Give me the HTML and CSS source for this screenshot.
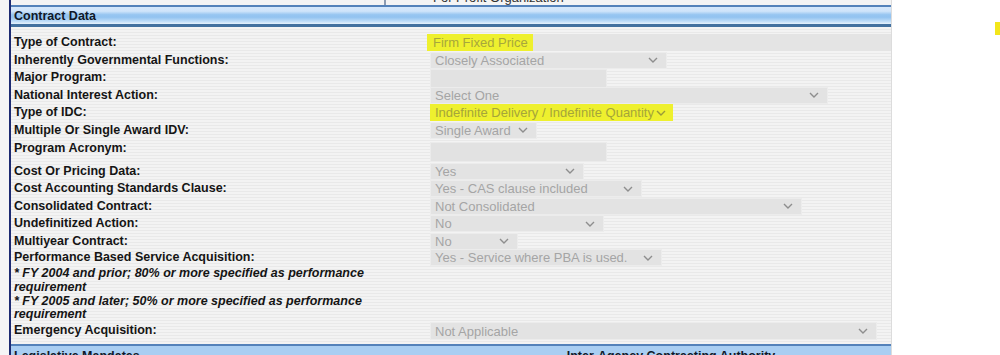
FILE: index.html
```html
<!DOCTYPE html>
<html lang="en">
<head>
  <title>Contract Data</title>
  <meta charset="UTF-8">
  <meta name="viewport" content="width=device-width, initial-scale=1">
  <link rel="stylesheet" href="styles.css">
</head>
<body>
  <div class="page">
    <div class="gutter"></div>
    <div class="panel">
      <div class="top-row">
        <div class="top-cell"></div>
        <div class="top-opt"><span class="dot"></span>For Profit Organization</div>
      </div>
      <div class="section-head">Contract Data</div>
      <div class="rows">
        <div class="row">
          <div class="label">Type of Contract:</div>
          <div class="field"><div class="bar"><span class="hl">Firm Fixed Price</span></div></div>
        </div>
        <div class="row">
          <div class="label">Inherently Governmental Functions:</div>
          <div class="field"><div class="select w237"><span>Closely Associated</span><svg width="10" height="6"><polyline points="1,1 5,5 9,1"/></svg></div></div>
        </div>
        <div class="row">
          <div class="label">Major Program:</div>
          <div class="field"><div class="input"></div></div>
        </div>
        <div class="row">
          <div class="label">National Interest Action:</div>
          <div class="field"><div class="select w398"><span>Select One</span><svg width="10" height="6"><polyline points="1,1 5,5 9,1"/></svg></div></div>
        </div>
        <div class="row">
          <div class="label">Type of IDC:</div>
          <div class="field"><div class="select w243 marked"><span>Indefinite Delivery / Indefinite Quantity</span><svg width="10" height="6"><polyline points="1,1 5,5 9,1"/></svg></div></div>
        </div>
        <div class="row">
          <div class="label">Multiple Or Single Award IDV:</div>
          <div class="field"><div class="select w107"><span>Single Award</span><svg width="10" height="6"><polyline points="1,1 5,5 9,1"/></svg></div></div>
        </div>
        <div class="row tall">
          <div class="label">Program Acronym:</div>
          <div class="field"><div class="input big"></div></div>
        </div>
        <div class="row">
          <div class="label">Cost Or Pricing Data:</div>
          <div class="field"><div class="select w154"><span>Yes</span><svg width="10" height="6"><polyline points="1,1 5,5 9,1"/></svg></div></div>
        </div>
        <div class="row">
          <div class="label">Cost Accounting Standards Clause:</div>
          <div class="field"><div class="select w212"><span>Yes - CAS clause included</span><svg width="10" height="6"><polyline points="1,1 5,5 9,1"/></svg></div></div>
        </div>
        <div class="row">
          <div class="label">Consolidated Contract:</div>
          <div class="field"><div class="select w372"><span>Not Consolidated</span><svg width="10" height="6"><polyline points="1,1 5,5 9,1"/></svg></div></div>
        </div>
        <div class="row">
          <div class="label">Undefinitized Action:</div>
          <div class="field"><div class="select w174"><span>No</span><svg width="10" height="6"><polyline points="1,1 5,5 9,1"/></svg></div></div>
        </div>
        <div class="row short">
          <div class="label">Multiyear Contract:</div>
          <div class="field"><div class="select w88"><span>No</span><svg width="10" height="6"><polyline points="1,1 5,5 9,1"/></svg></div></div>
        </div>
        <div class="row auto">
          <div class="label">
            Performance Based Service Acquisition:
            <div class="note">* FY 2004 and prior; 80% or more specified as performance requirement</div>
            <div class="note">* FY 2005 and later; 50% or more specified as performance requirement</div>
          </div>
          <div class="field"><div class="select w232"><span>Yes - Service where PBA is used.</span><svg width="10" height="6"><polyline points="1,1 5,5 9,1"/></svg></div></div>
        </div>
        <div class="row">
          <div class="label">Emergency Acquisition:</div>
          <div class="field"><div class="select w447 tall-sel"><span>Not Applicable</span><svg width="10" height="6"><polyline points="1,1 5,5 9,1"/></svg></div></div>
        </div>
      </div>
      <div class="section-head split">
        <div class="half">Legislative Mandates</div>
        <div class="half center">Inter-Agency Contracting Authority</div>
      </div>
    </div>
    <div class="side"><span class="mark"></span></div>
  </div>
</body>
</html>
```

FILE: styles.css
```css
/* page */
body {
  margin: 0;
  font-family: "Liberation Sans", Arial, Helvetica, sans-serif;
  background: #fff;
  overflow: hidden;
}

.page {
  display: flex;
  height: 355px;
  overflow: hidden;
}

.gutter {
  width: 9px;
  background: #f5f5f6;
}

/* main panel */
.panel {
  width: 880px;
  border-left: 2px solid #1d2b72;
  border-right: 1px solid #dcdcdc;
  background: repeating-linear-gradient(to bottom, #f3f3f3 0, #f3f3f3 2px, #e9e9e9 2px, #e9e9e9 3px);
}

/* row cut off above */
.top-row {
  display: flex;
  height: 5px;
  overflow: hidden;
  background: #f4f4f4;
}

.top-cell {
  width: 373px;
  border-right: 2px solid #8d9cb2;
}

.top-opt {
  margin-top: -10px;
  padding-left: 37px;
  font-size: 13px;
  line-height: 15px;
  color: #333;
  display: flex;
  align-items: center;
}

.dot {
  width: 4px;
  height: 4px;
  margin-right: 6px;
  background: #c9d3a8;
}

/* blue section bars */
.section-head {
  height: 17px;
  border-top: 2px solid #5482ba;
  border-bottom: 3px solid #42709f;
  background: linear-gradient(to bottom, #d6e8fb 0, #cfe4fa 25%, #98c6f1 45%, #93c3f0 60%, #c0ddf8 85%, #e6f1fc 100%);
  padding-left: 3px;
  font-size: 12.5px;
  font-weight: bold;
  line-height: 18px;
  color: #101828;
}

.section-head.split {
  display: flex;
  height: 11px;
  margin-top: 4px;
  border-bottom: none;
  background: #a9cef2;
  padding-top: 3px;
  line-height: 15px;
  overflow: hidden;
  align-items: flex-start;
}

.half {
  width: 438px;
}

.half.center {
  text-align: center;
}

/* form rows */
.rows {
  padding-top: 7px;
}

.row {
  display: flex;
  height: 17.6px;
}

.row.tall {
  height: 23px;
}

.row.short {
  height: 16.5px;
}

.row.auto {
  height: auto;
}

.label {
  width: 416px;
  padding-left: 3px;
  font-size: 12.5px;
  font-weight: bold;
  line-height: 17.6px;
  color: #151515;
}

.note {
  font-style: italic;
  line-height: 13.8px;
}

.field {
  flex: 1;
}

/* disabled controls */
.bar {
  height: 17px;
  margin-left: -3px;
  background: #e4e4e4;
  font-size: 13px;
  line-height: 17px;
}

.hl {
  display: inline-block;
  padding: 0 5px 0 6px;
  background: #eef02e;
  color: #a7a73c;
}

.select {
  display: flex;
  align-items: center;
  justify-content: space-between;
  box-sizing: border-box;
  height: 17px;
  padding: 0 8px 0 4px;
  background: #e3e3e3;
  border: 1px solid #ececec;
  font-size: 13px;
  color: #a5a5a5;
  white-space: nowrap;
}

.select svg {
  flex: none;
  fill: none;
  stroke: #8e8e8e;
  stroke-width: 1.4;
}

.select.marked {
  background: #eef02e;
  border-color: #eef02e;
  color: #a5a53a;
  padding-right: 6px;
}

.select.marked svg {
  stroke: #9a9a3a;
}

.select.tall-sel {
  height: 18px;
}

.input {
  width: 177px;
  height: 19px;
  box-sizing: border-box;
  background: #e2e2e2;
  border: 1px solid #ebebeb;
}

.input.big {
  height: 20px;
  margin-top: 2px;
}

.w88 { width: 88px; }
.w107 { width: 107px; }
.w154 { width: 154px; }
.w174 { width: 174px; }
.w212 { width: 212px; }
.w232 { width: 232px; }
.w237 { width: 237px; }
.w243 { width: 243px; }
.w372 { width: 372px; }
.w398 { width: 398px; }
.w447 { width: 447px; }

/* right margin area */
.side {
  flex: 1;
  display: flex;
  justify-content: flex-end;
  align-items: flex-start;
  padding-top: 22px;
}

.mark {
  width: 5px;
  height: 13px;
  background: #f3e61a;
}
```
